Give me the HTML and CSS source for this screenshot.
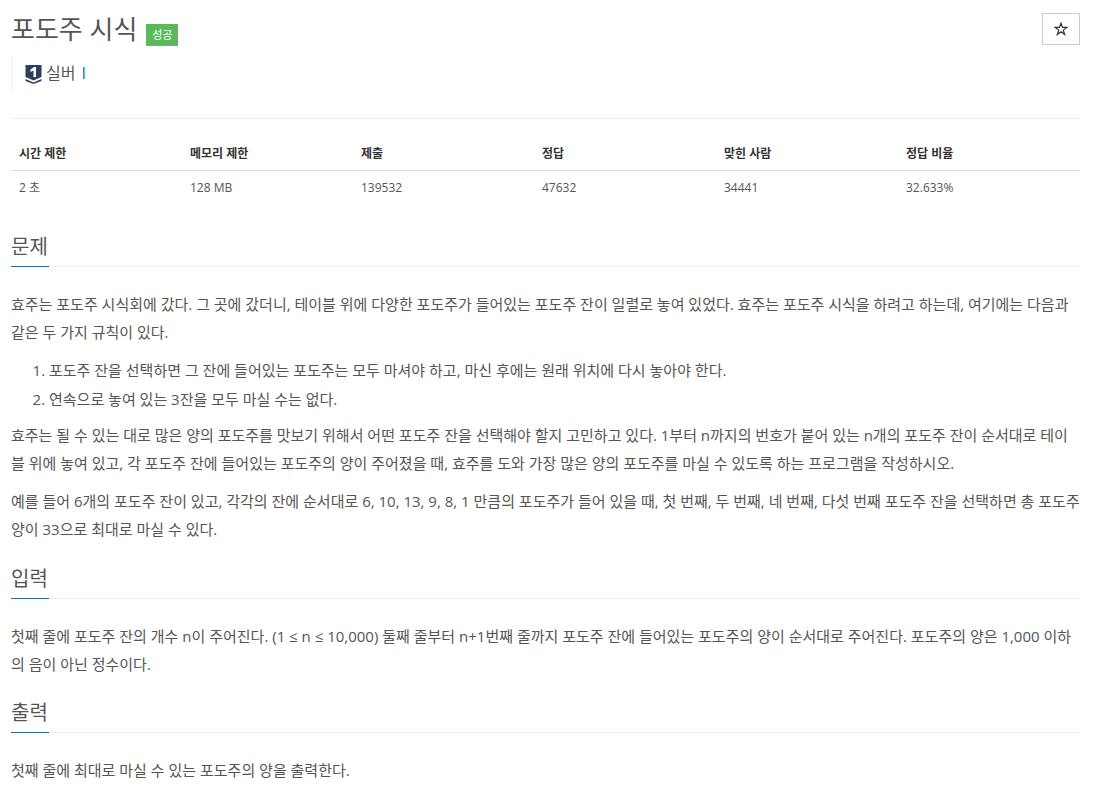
FILE: index.html
```html
<!DOCTYPE html>
<html>
<head>
<meta name="viewport" content="width=device-width, initial-scale=1.0">
<link rel="stylesheet" href="styles.css">
</head>
<body>

<div class="page-header">
  <div class="title-row">
    <h1>포도주 시식</h1>
    <span class="label-success">성공</span>
  </div>
  <button class="star-btn">
    <svg width="14" height="14" viewBox="0 0 14 14">
      <path d="M7 1.2L8.5 5.4H12.9L9.3 8.1L10.7 12.5L7 9.8L3.3 12.5L4.7 8.1L1.1 5.4H5.5Z" fill="none" stroke="#333" stroke-width="1.2"/>
    </svg>
  </button>
</div>

<blockquote class="tier">
  <svg class="tier-icon" width="17" height="20" viewBox="0 0 17 20">
    <path d="M0.5 1H16.5V13L8.5 16.5L0.5 13Z" fill="#2d4059"/>
    <path d="M0.5 15L8.5 18.5L16.5 15V17L8.5 20L0.5 17Z" fill="#2d4059"/>
    <path d="M5.5 5.5L9 3H11V13H8.5V6.5L5.5 8Z" fill="#fff"/>
  </svg>
  <span class="tier-name">실버 <a href="#">I</a></span>
</blockquote>

<hr class="divider">

<table class="info">
  <colgroup>
    <col class="c1"><col class="c2"><col class="c3"><col class="c4"><col class="c5"><col class="c6">
  </colgroup>
  <thead>
    <tr><th>시간 제한</th><th>메모리 제한</th><th>제출</th><th>정답</th><th>맞힌 사람</th><th>정답 비율</th></tr>
  </thead>
  <tbody>
    <tr><td>2 초</td><td>128 MB</td><td>139532</td><td>47632</td><td>34441</td><td>32.633%</td></tr>
  </tbody>
</table>

<section class="problem">
  <div class="headline"><h2>문제</h2></div>
  <p>효주는 포도주 시식회에 갔다. 그 곳에 갔더니, 테이블 위에 다양한 포도주가 들어있는 포도주 잔이 일렬로 놓여 있었다. 효주는 포도주 시식을 하려고 하는데, 여기에는 다음과 같은 두 가지 규칙이 있다.</p>
  <ol>
    <li>포도주 잔을 선택하면 그 잔에 들어있는 포도주는 모두 마셔야 하고, 마신 후에는 원래 위치에 다시 놓아야 한다.</li>
    <li>연속으로 놓여 있는 3잔을 모두 마실 수는 없다.</li>
  </ol>
  <p>효주는 될 수 있는 대로 많은 양의 포도주를 맛보기 위해서 어떤 포도주 잔을 선택해야 할지 고민하고 있다. 1부터 n까지의 번호가 붙어 있는 n개의 포도주 잔이 순서대로 테이블 위에 놓여 있고, 각 포도주 잔에 들어있는 포도주의 양이 주어졌을 때, 효주를 도와 가장 많은 양의 포도주를 마실 수 있도록 하는 프로그램을 작성하시오.</p>
  <p>예를 들어 6개의 포도주 잔이 있고, 각각의 잔에 순서대로 6, 10, 13, 9, 8, 1 만큼의 포도주가 들어 있을 때, 첫 번째, 두 번째, 네 번째, 다섯 번째 포도주 잔을 선택하면 총 포도주 양이 33으로 최대로 마실 수 있다.</p>
</section>

<section class="problem">
  <div class="headline"><h2>입력</h2></div>
  <p>첫째 줄에 포도주 잔의 개수 n이 주어진다. (1 ≤ n ≤ 10,000) 둘째 줄부터 n+1번째 줄까지 포도주 잔에 들어있는 포도주의 양이 순서대로 주어진다. 포도주의 양은 1,000 이하의 음이 아닌 정수이다.</p>
</section>

<section class="problem">
  <div class="headline"><h2>출력</h2></div>
  <p>첫째 줄에 최대로 마실 수 있는 포도주의 양을 출력한다.</p>
</section>

</body>
</html>
```

FILE: styles.css
```css
body {
  margin: 0;
  padding: 0 33px 0 11px;
  background-color: #fff;
  color: #555;
  font-family: "Open Sans", "Noto Sans CJK KR", sans-serif;
  font-size: 15px;
  line-height: 28px;
  overflow: hidden;
  word-break: break-all;
}

.page-header {
  display: flex;
  justify-content: space-between;
  align-items: flex-start;
  padding-top: 13px;
}

.title-row {
  display: flex;
  align-items: flex-start;
}

h1 {
  margin: 0;
  font-size: 26px;
  font-weight: 400;
  line-height: 32px;
  color: #555;
}

.label-success {
  margin: 11px 0 0 9px;
  height: 22px;
  width: 32px;
  background-color: #5cb85c;
  color: #fff;
  font-size: 11px;
  line-height: 22px;
  text-align: center;
  white-space: nowrap;
}

.star-btn {
  display: flex;
  align-items: center;
  justify-content: center;
  width: 38px;
  height: 32px;
  padding: 0;
  border: 1px solid #ccc;
  border-radius: 0;
  background-color: #fff;
}

.tier {
  display: flex;
  align-items: center;
  gap: 4px;
  margin: 10px 0 0;
  padding: 0 0 0 13px;
  height: 36px;
  border-left: 1px solid #eee;
}

.tier-icon {
  display: block;
}

.tier-name {
  font-size: 16px;
  line-height: 24px;
  margin-top: -2px;
  word-spacing: 2px;
}

.tier-name a {
  color: #0076c0;
  text-decoration: none;
}

.divider {
  height: 0;
  margin: 26px 0 0;
  border: 0;
  border-top: 1px solid #eee;
}

.info {
  width: 100%;
  margin-top: 19px;
  border-collapse: collapse;
  table-layout: fixed;
  font-size: 12px;
}

.c1, .c2 { width: 171px; }
.c3 { width: 181px; }
.c4, .c5 { width: 182px; }

.info th {
  padding: 0 8px;
  height: 32px;
  border-bottom: 1px solid #ddd;
  color: #333;
  font-weight: 700;
  text-align: left;
}

.info td {
  padding: 0 8px;
  height: 34px;
  color: #555;
}

.headline {
  margin-top: 21.5px;
  border-bottom: 1px dotted #e0e0e0;
}

.problem:first-of-type .headline {
  margin-top: 28px;
}

h2 {
  display: inline-block;
  margin: 0 0 -1px;
  padding: 0 1px 5px 0;
  border-bottom: 1px solid #0076c0;
  font-size: 20px;
  font-weight: 400;
  line-height: 28px;
  color: #555;
  vertical-align: bottom;
}

p {
  margin: 0 0 10px;
}

.headline + p {
  margin-top: 23px;
}

ol {
  margin: 0 0 7px;
  padding-left: 38px;
  line-height: 29px;
}
```
